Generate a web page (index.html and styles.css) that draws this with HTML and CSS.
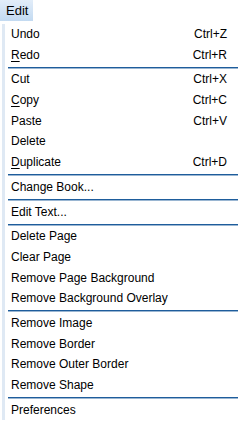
FILE: index.html
```html
<!DOCTYPE html>
<html lang="en">
<head>
<meta charset="UTF-8">
<title>Edit Menu</title>
<link rel="stylesheet" href="styles.css">
</head>
<body>

<div class="menubar">
    <div class="menu-title">Edit</div>
</div>

<div class="menu">
    <div class="item"><span>Undo</span><span class="key">Ctrl+Z</span></div>
    <div class="item"><span><u>R</u>edo</span><span class="key">Ctrl+R</span></div>
    <div class="sep"></div>
    <div class="item"><span>Cut</span><span class="key">Ctrl+X</span></div>
    <div class="item"><span><u>C</u>opy</span><span class="key">Ctrl+C</span></div>
    <div class="item"><span>Paste</span><span class="key">Ctrl+V</span></div>
    <div class="item"><span>Delete</span></div>
    <div class="item"><span><u>D</u>uplicate</span><span class="key">Ctrl+D</span></div>
    <div class="sep"></div>
    <div class="item"><span>Change Book...</span></div>
    <div class="sep"></div>
    <div class="item"><span>Edit Text...</span></div>
    <div class="sep"></div>
    <div class="item"><span>Delete Page</span></div>
    <div class="item"><span>Clear Page</span></div>
    <div class="item"><span>Remove Page Background</span></div>
    <div class="item"><span>Remove Background Overlay</span></div>
    <div class="sep"></div>
    <div class="item"><span>Remove Image</span></div>
    <div class="item"><span>Remove Border</span></div>
    <div class="item"><span>Remove Outer Border</span></div>
    <div class="item"><span>Remove Shape</span></div>
    <div class="sep"></div>
    <div class="item"><span>Preferences</span></div>
</div>

</body>
</html>
```

FILE: styles.css
```css
*{
    box-sizing:border-box;
}

body{
    margin:0;
    background:#fff;
    font-family:"Liberation Sans", Arial, sans-serif;
    font-size:12px;
    color:#000;
}

/* menubar */
.menubar{
    height:21px;
    display:flex;
}

.menu-title{
    width:33px;
    padding-left:6px;
    line-height:21px;
    font-size:13px;
    background:linear-gradient(#e2edf9,#c3daf1);
}

/* dropdown */
.menu{
    margin:3px 0 0 2px;
    padding:0 3px 0 2px;
    border-left:3px solid #dfe9f4;
}

.item{
    height:20.7px;
    line-height:20.7px;
    display:flex;
    justify-content:space-between;
    padding:0 11px 0 4px;
}

.item u{
    text-decoration-thickness:1px;
    text-underline-offset:2px;
}

.sep{
    height:4px;
    display:flex;
    align-items:center;
    margin-left:1px;
}

.sep::after{
    content:"";
    flex:1;
    border-top:1px solid #1e5d9c;
    box-shadow:0 1px 0 rgba(30,93,156,.45);
}
```
